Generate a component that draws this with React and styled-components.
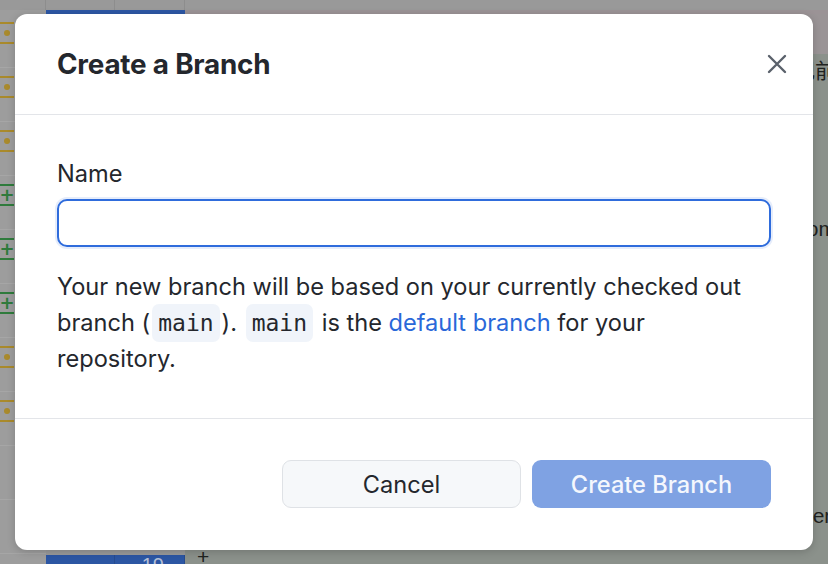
import React from "react";
import styled, { createGlobalStyle } from "styled-components";

const GlobalStyle = createGlobalStyle`
  html, body {
    margin: 0;
    padding: 0;
    width: 100%;
    height: 100%;
    overflow: hidden;
  }
  body {
    font-family: Inter, "Noto Sans", sans-serif;
  }
`;

const Screen = styled.div`
  position: relative;
  width: 828px;
  height: 564px;
  overflow: hidden;
  background-color: #8b918b;
`;

// ---------- dimmed editor behind the modal ----------

const Editor = styled.div`
  display: flex;
  flex-direction: column;
  height: 100%;
`;

const TopBar = styled.div`
  display: grid;
  grid-template-columns: 46px 69px 70px 1fr;
  height: 10px;
  background-color: #999999;
`;

const TopCell = styled.div`
  border-right: 1px solid #8d8d8d;
`;

const EditorBody = styled.div`
  flex: 1;
  display: grid;
  grid-template-columns: 46px 139px 1fr;
  min-height: 0;
`;

const Gutter = styled.div`
  display: flex;
  flex-direction: column;
  padding-top: 4px;
  background-color: #9d9d9d;
`;

const GutterRow = styled.div`
  height: 54px;
  flex-shrink: 0;
  border-bottom: 1px solid #a6a6a6;
  box-sizing: border-box;
`;

const Mark = styled.div`
  margin-top: 8px;
  width: 14px;
  height: 22px;
  box-sizing: border-box;
  border-top: 2px solid ${(p) => (p.$kind === "add" ? "#2f7b3c" : "#a98a2c")};
  border-bottom: 2px solid ${(p) => (p.$kind === "add" ? "#2f7b3c" : "#a98a2c")};
  display: flex;
  align-items: center;
  justify-content: center;
  color: #2f7b3c;
  font-family: "DejaVu Sans", sans-serif;
  font-size: 18px;
  font-weight: 700;
  line-height: 1;
`;

const Dot = styled.span`
  width: 6px;
  height: 6px;
  border-radius: 50%;
  background-color: #a98a2c;
`;

const Numbers = styled.div`
  display: flex;
  flex-direction: column;
  background-color: #9a9a9a;
`;

const NumberTab = styled.div`
  height: 4px;
  background-color: #2d57a4;
`;

const NumberSpacer = styled.div`
  flex: 1;
`;

const SelectedNumber = styled.div`
  display: grid;
  grid-template-columns: 69px 70px;
  height: 16px;
  background-color: #2c56a3;
`;

const NumberCell = styled.div`
  border-right: 1px solid #264b90;
  color: #b4bfd6;
  font-family: "Liberation Sans", sans-serif;
  font-size: 20px;
  line-height: 1;
  text-align: right;
  padding: 0 20px 0 0;
  overflow: hidden;
`;

const Content = styled.div`
  display: flex;
  flex-direction: column;
  min-width: 0;
`;

const ContentTab = styled.div`
  height: 40px;
  flex-shrink: 0;
  background-color: #9a9496;
  border-top: 4px solid #9b9396;
`;

const CodeLine = styled.div`
  height: ${(p) => p.$height}px;
  flex-shrink: 0;
  display: flex;
  align-items: flex-end;
  justify-content: ${(p) => (p.$left ? "flex-start" : "flex-end")};
  padding-left: ${(p) => (p.$left ? "12px" : "0")};
  margin-right: -8px;
  color: #1f2220;
  font-family: "Liberation Sans", "Noto Sans CJK SC", sans-serif;
  font-size: 21px;
  line-height: 28px;
  white-space: nowrap;
`;

// ---------- modal ----------

const Overlay = styled.div`
  position: absolute;
  inset: 0;
  display: flex;
  align-items: center;
  justify-content: center;
`;

const Dialog = styled.div`
  width: 798px;
  height: 536px;
  display: flex;
  flex-direction: column;
  background-color: #ffffff;
  border-radius: 12px;
  box-shadow: 0 2px 8px rgba(0, 0, 0, 0.18);
  overflow: hidden;
  color: #1f2328;
`;

const Header = styled.div`
  height: 100px;
  flex-shrink: 0;
  display: flex;
  align-items: center;
  justify-content: space-between;
  padding: 0 19px 0 42px;
  border-bottom: 1.5px solid #e3e5e9;
`;

const Title = styled.h2`
  margin: 0;
  font-size: 27.8px;
  font-weight: 700;
  letter-spacing: -0.2px;
  color: #24272d;
`;

const CloseButton = styled.button`
  width: 34px;
  height: 34px;
  padding: 0;
  border: none;
  background: none;
  display: flex;
  align-items: center;
  justify-content: center;
  color: #5a616b;
  cursor: pointer;
`;

const Body = styled.div`
  flex: 1;
  padding: 44px 42px 0;
  border-bottom: 1.5px solid #e3e5e9;
`;

const Label = styled.label`
  display: block;
  font-size: 23.6px;
  line-height: 30px;
  color: #24272d;
`;

const Input = styled.input`
  display: block;
  box-sizing: border-box;
  width: 100%;
  height: 48px;
  margin-top: 10px;
  padding: 0 14px;
  border: 2px solid #2f6cdc;
  border-radius: 10px;
  outline: none;
  box-shadow: 0 0 0 2px rgba(47, 108, 220, 0.12);
  font-family: inherit;
  font-size: 23.6px;
`;

const Help = styled.p`
  margin: 22px 0 0;
  padding-right: 10px;
  font-size: 23.6px;
  line-height: 36px;
  color: #24272d;
`;

const Code = styled.code`
  margin: 0 2px;
  padding: 6px 6px;
  border-radius: 7px;
  background-color: #f0f4fa;
  font-family: "DejaVu Sans Mono", monospace;
  font-size: 23px;
  color: #24272d;
`;

const Link = styled.a`
  color: #2a68d9;
  text-decoration: none;
`;

const Footer = styled.div`
  height: 131px;
  flex-shrink: 0;
  box-sizing: border-box;
  display: flex;
  align-items: center;
  justify-content: flex-end;
  gap: 11px;
  padding: 0 42px 1px;
`;

const Button = styled.button`
  width: 239px;
  height: 48px;
  box-sizing: border-box;
  border-radius: 9px;
  font-family: inherit;
  font-size: 23.6px;
  font-weight: ${(p) => (p.$primary ? 500 : 400)};
  color: ${(p) => (p.$primary ? "#f4f7fd" : "#24272d")};
  background-color: ${(p) => (p.$primary ? "#7fa2e3" : "#f6f8fa")};
  border: ${(p) => (p.$primary ? "none" : "1.5px solid #dfe2e6")};
  cursor: pointer;
`;

const gutterMarks = ["mod", "mod", "mod", "add", "add", "add", "mod", "mod", null, null];

const codeLines = [
  { height: 31, text: "提交记前" },
  { height: 158, text: "from" },
  { height: 287, text: "open" },
  { height: 41, text: "+", left: true },
];

function CloseIcon() {
  return (
    <svg width="20" height="20" viewBox="0 0 20 20" fill="none">
      <path
        d="M2 2 L18 18 M18 2 L2 18"
        stroke="currentColor"
        strokeWidth="2.4"
        strokeLinecap="round"
      />
    </svg>
  );
}

function App() {
  return (
    <>
      <GlobalStyle />
      <Screen>
        <Editor>
          <TopBar>
            <TopCell />
            <TopCell />
            <TopCell />
            <div />
          </TopBar>
          <EditorBody>
            <Gutter>
              {gutterMarks.map((kind, index) => (
                <GutterRow key={index}>
                  {kind && (
                    <Mark $kind={kind}>{kind === "add" ? "+" : <Dot />}</Mark>
                  )}
                </GutterRow>
              ))}
            </Gutter>
            <Numbers>
              <NumberTab />
              <NumberSpacer />
              <SelectedNumber>
                <NumberCell />
                <NumberCell>19</NumberCell>
              </SelectedNumber>
            </Numbers>
            <Content>
              <ContentTab />
              {codeLines.map((line, index) => (
                <CodeLine key={index} $height={line.height} $left={line.left}>
                  {line.text}
                </CodeLine>
              ))}
            </Content>
          </EditorBody>
        </Editor>

        <Overlay>
          <Dialog role="dialog" aria-labelledby="create-branch-title">
            <Header>
              <Title id="create-branch-title">Create a Branch</Title>
              <CloseButton aria-label="Close">
                <CloseIcon />
              </CloseButton>
            </Header>
            <Body>
              <Label htmlFor="branch-name">Name</Label>
              <Input id="branch-name" />
              <Help>
                Your new branch will be based on your currently checked out
                branch (<Code>main</Code>). <Code>main</Code> is the{" "}
                <Link href="#">default branch</Link> for your repository.
              </Help>
            </Body>
            <Footer>
              <Button>Cancel</Button>
              <Button $primary>Create Branch</Button>
            </Footer>
          </Dialog>
        </Overlay>
      </Screen>
    </>
  );
}

export default App;
